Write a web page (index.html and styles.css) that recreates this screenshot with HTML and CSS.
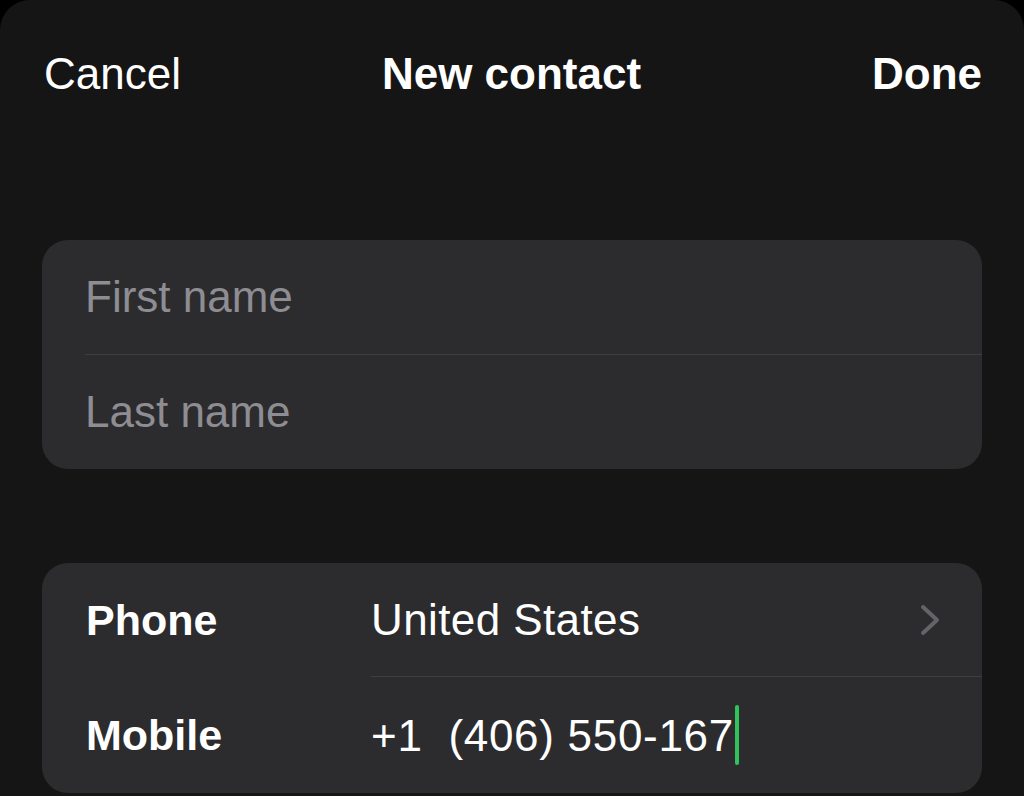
FILE: index.html
```html
<!DOCTYPE html>
<html>
<head>
<meta name="viewport" content="width=device-width, initial-scale=1">
<link rel="stylesheet" href="styles.css">
</head>
<body>
<div class="sheet">
  <!-- nav bar -->
  <div class="navbar">
    <span class="nav-btn">Cancel</span>
    <span class="nav-title">New contact</span>
    <span class="nav-btn nav-done">Done</span>
  </div>

  <!-- name fields -->
  <div class="card">
    <div class="name-row">
      <span class="placeholder">First name</span>
    </div>
    <div class="name-row">
      <span class="placeholder">Last name</span>
    </div>
  </div>

  <!-- phone fields -->
  <div class="card">
    <div class="phone-row">
      <span class="phone-label">Phone</span>
      <div class="phone-value first">
        <span>United States</span>
        <svg class="chevron" width="24" height="34" viewBox="0 0 24 34">
          <path d="M5 4 L19 17 L5 30" fill="none" stroke="#646468" stroke-width="4" stroke-linecap="round" stroke-linejoin="round"/>
        </svg>
      </div>
    </div>
    <div class="phone-row">
      <span class="phone-label">Mobile</span>
      <div class="phone-value number">
        <span>+1&nbsp;&nbsp;(406) 550-167<span class="caret"></span></span>
      </div>
    </div>
  </div>
</div>
</body>
</html>
```

FILE: styles.css
```css
* {box-sizing: border-box}
body {
  margin: 0;
  background-color: #000;
  font-family: "Liberation Sans", Arial, sans-serif;
  color: #fff;
}

.sheet {
  height: 796px;
  background-color: #151515;
  border-radius: 30px 30px 0 0;
  padding: 0 42px 0 42px;
  overflow: hidden;
}

/* top bar */
.navbar {
  display: flex;
  align-items: center;
  justify-content: space-between;
  height: 148px;
  padding: 0 0 0 2px;
  margin-bottom: 92px;
  font-size: 44px;
}
.nav-title {
  font-weight: bold;
  margin-right: 30px;
}
.nav-done {
  font-weight: bold;
}

/* grouped cards */
.card {
  background-color: #2c2c2e;
  border-radius: 26px;
  margin-bottom: 94px;
  overflow: hidden;
}

.name-row {
  height: 114px;
  margin-left: 43px;
  display: flex;
  align-items: center;
  font-size: 44px;
}
.name-row + .name-row {
  height: 115px;
  border-top: 1px solid #3e3e41;
}
.placeholder {
  color: #8e8d93;
}

.phone-row {
  display: flex;
  height: 114px;
  font-size: 44px;
}
.phone-row + .phone-row {
  height: 116px;
}
.phone-label {
  width: 329px;
  padding-left: 44px;
  display: flex;
  align-items: center;
  font-weight: bold;
  font-size: 43px;
}
.phone-value {
  flex: 1;
  display: flex;
  align-items: center;
  justify-content: space-between;
  padding-right: 40px;
  letter-spacing: 0.4px;
}
.phone-value.number {
  letter-spacing: 0.7px;
}
.phone-value.first {
  border-bottom: 1px solid #3e3e41;
}
.chevron {
  display: block;
}
.caret {
  display: inline-block;
  width: 4px;
  height: 60px;
  margin-left: 1px;
  vertical-align: -14px;
  background-color: #30c35a;
  border-radius: 2px;
}
```
